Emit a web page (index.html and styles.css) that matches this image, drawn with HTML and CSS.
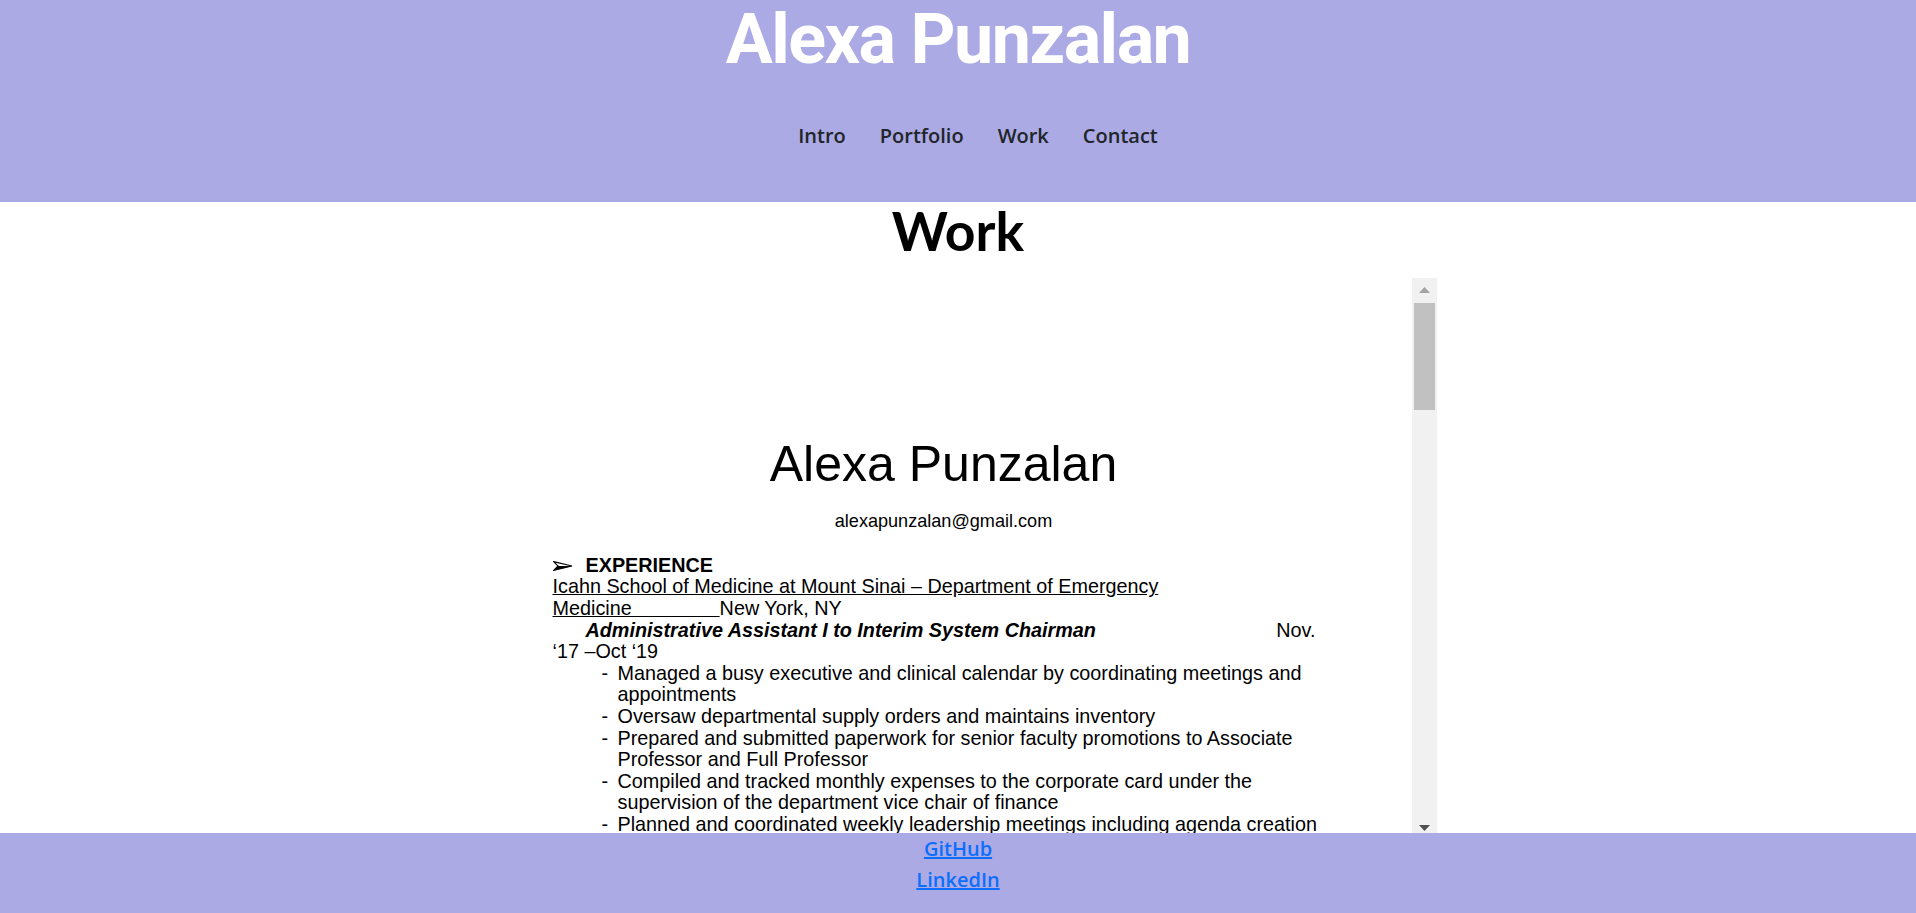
FILE: index.html
```html
<!DOCTYPE html>
<html lang="en">
<head>
<meta charset="utf-8">
<title>Alexa Punzalan - Work</title>
<link rel="stylesheet" href="styles.css">
</head>
<body>
<header class="site-header">
  <h1 class="site-title">Alexa Punzalan</h1>
  <nav class="site-nav">
    <a href="#intro">Intro</a>
    <a href="#portfolio">Portfolio</a>
    <a href="#work">Work</a>
    <a href="#contact">Contact</a>
  </nav>
</header>

<main class="content">
  <h2 class="section-title" id="work">Work</h2>
  <div class="doc-frame">
    <div class="doc-page">
      <div class="doc-text">
        <p class="doc-name">Alexa Punzalan</p>
        <p class="doc-email">alexapunzalan@gmail.com</p>
        <p class="doc-heading"><span class="doc-arrow"><svg width="20" height="10" viewBox="0 0 20 10"><polygon points="0.6,0.6 19,5 0.6,9.4 5,5" fill="none" stroke="#000" stroke-width="1.1"/><polygon points="5,5 19,5 0.6,9.4" fill="#000"/></svg></span><b>EXPERIENCE</b></p>
        <p class="doc-line"><u>Icahn School of Medicine at Mount Sinai – Department of Emergency</u><br><u>Medicine&nbsp;&nbsp;&nbsp;&nbsp;&nbsp;&nbsp;&nbsp;&nbsp;&nbsp;&nbsp;&nbsp;&nbsp;&nbsp;&nbsp;&nbsp;&nbsp;</u>New York, NY</p>
        <p class="doc-role"><b><i>Administrative Assistant I to Interim System Chairman</i></b><span class="doc-date">Nov.</span></p>
        <p class="doc-line">‘17 –Oct ‘19</p>
        <ul class="doc-list">
          <li><span class="dash">-</span><span>Managed a busy executive and clinical calendar by coordinating meetings and<br>appointments</span></li>
          <li><span class="dash">-</span><span>Oversaw departmental supply orders and maintains inventory</span></li>
          <li><span class="dash">-</span><span>Prepared and submitted paperwork for senior faculty promotions to Associate<br>Professor and Full Professor</span></li>
          <li><span class="dash">-</span><span>Compiled and tracked monthly expenses to the corporate card under the<br>supervision of the department vice chair of finance</span></li>
          <li><span class="dash">-</span><span>Planned and coordinated weekly leadership meetings including agenda creation</span></li>
        </ul>
      </div>
    </div>
    <div class="scrollbar">
      <div class="sb-button"><svg width="11" height="6" viewBox="0 0 11 6"><polygon points="5.5,0 11,6 0,6" fill="#a3a3a3"/></svg></div>
      <div class="sb-track"><div class="sb-thumb"></div></div>
      <div class="sb-button"><svg width="11" height="6" viewBox="0 0 11 6"><polygon points="0,0 11,0 5.5,6" fill="#505050"/></svg></div>
    </div>
  </div>
</main>

<footer class="site-footer">
  <a href="#github">GitHub</a>
  <a href="#linkedin">LinkedIn</a>
</footer>
</body>
</html>
```

FILE: styles.css
```css
* { box-sizing: border-box; }

body {
  margin: 0;
  background: #ffffff;
  font-family: "Open Sans", "Noto Sans", sans-serif;
  color: #212529;
  height: 913px;
  overflow: hidden;
}

.site-header {
  background: #abaae5;
  height: 202px;
  padding-top: 4px;
  display: flex;
  flex-direction: column;
  align-items: center;
}

.site-title {
  margin: 0;
  font-family: Roboto, "Open Sans", sans-serif;
  font-weight: 700;
  font-size: 70px;
  line-height: 70px;
  letter-spacing: -1.5px;
  color: #ffffff;
}

.site-nav {
  margin-top: 52px;
  padding-left: 40px;
  display: flex;
  gap: 34px;
  line-height: 20px;
}

.site-nav a {
  font-family: "Open Sans", sans-serif;
  font-weight: 600;
  font-size: 20px;
  color: #212529;
  text-decoration: none;
}

.content {
  display: flex;
  flex-direction: column;
  align-items: center;
}

.section-title {
  margin: 2px 0 20px;
  font-family: Lato, "Open Sans", sans-serif;
  font-weight: 700;
  font-size: 53.5px;
  line-height: 53.5px;
  color: #000000;
}

.doc-frame {
  width: 957px;
  height: 563px;
  display: flex;
  background: #ffffff;
  overflow: hidden;
}

.doc-page {
  flex: 1;
  overflow: hidden;
  padding: 161.6px 0 0 73px;
  font-family: "Liberation Sans", Arial, sans-serif;
  color: #000000;
  font-size: 19.8px;
  line-height: 21.6px;
}

.doc-text {
  width: 782px;
}

.doc-text p {
  margin: 0;
}

.doc-name {
  text-align: center;
  font-size: 50px;
  line-height: 50px;
}

.doc-email {
  margin-top: 21.5px !important;
  text-align: center;
  font-size: 18.1px;
}

.doc-heading {
  margin-top: 22.6px !important;
  display: flex;
  align-items: center;
}

.doc-arrow {
  width: 33px;
  display: inline-flex;
  padding-top: 1px;
}

.doc-role {
  display: flex;
  justify-content: space-between;
  padding: 0 19px 0 33px;
}

.doc-list {
  list-style: none;
  margin: 0;
  padding: 0 0 0 49px;
}

.doc-list li {
  display: grid;
  grid-template-columns: 16px 1fr;
}

.scrollbar {
  width: 25px;
  flex: none;
  background: #f1f1f1;
  display: flex;
  flex-direction: column;
}

.sb-button {
  height: 25px;
  display: flex;
  align-items: center;
  justify-content: center;
}

.sb-track {
  flex: 1;
  padding: 0 2px;
}

.sb-thumb {
  height: 107px;
  background: #c1c1c1;
}

.site-footer {
  position: fixed;
  left: 0;
  right: 0;
  bottom: 0;
  height: 80px;
  background: #abaae5;
  display: flex;
  flex-direction: column;
  align-items: center;
}

.site-footer a {
  font-family: "Open Sans", sans-serif;
  font-weight: 600;
  font-size: 20px;
  line-height: 31px;
  color: #0d6efd;
  text-decoration: underline;
}
```
